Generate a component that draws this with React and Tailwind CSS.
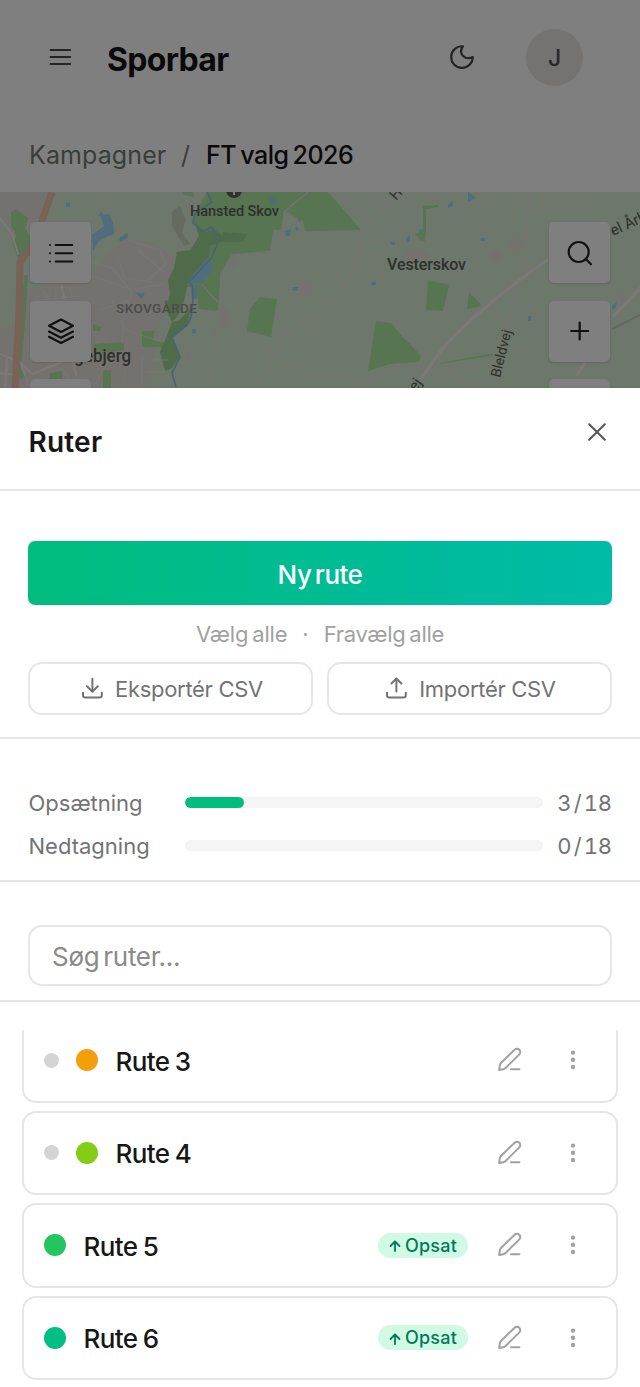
const routes = [
  { name: "Rute 3", color: "bg-[#f59e0b]", handle: true, done: false },
  { name: "Rute 4", color: "bg-[#84cc16]", handle: true, done: false },
  { name: "Rute 5", color: "bg-[#22c55e]", handle: false, done: true },
  { name: "Rute 6", color: "bg-[#02bd84]", handle: false, done: true },
];

function Icon({ size, width = 2, className = "", children }) {
  return (
    <svg
      width={size}
      height={size}
      viewBox={`0 0 ${size} ${size}`}
      fill="none"
      stroke="currentColor"
      strokeWidth={width}
      strokeLinecap="round"
      strokeLinejoin="round"
      className={`shrink-0 ${className}`}
    >
      {children}
    </svg>
  );
}

function MapButton({ children }) {
  return (
    <button className="flex size-[61px] shrink-0 items-center justify-center rounded-[5px] bg-white text-[#222] shadow-sm">
      {children}
    </button>
  );
}

function MapCanvas() {
  return (
    <svg width="640" height="196" viewBox="0 192 640 196" className="block">
      <rect y="192" width="640" height="196" fill="#dceed6" />

      {/* Built-up areas */}
      <g fill="#e9e4df">
        <path d="M0 192h50l-8 26-14 36-8 6-14-34-6-8z" />
        <path d="M22 290l68-16 20-22 18-12 24 2 20 14 10-4-6 20-2 30-14 20-4 20-6 46H0v-60l18-4z" />
        <path d="M219 233l10 5-5 8-6-2zM231 246h6l1 10-7 1zM221 307l8 2-2 18-8-4zM186 266l6-3-2 5z" />
        <path d="M229 258l10 0-2 8-8 4zM186 350l6 6-6 8zM208 334l8-5v6z" />
        <circle cx="306" cy="289" r="7" />
        <circle cx="516" cy="245" r="7" />
        <circle cx="496" cy="256" r="6" />
        <path d="M405 252h24v8h-26zM614 296l10-3 3 9-8 5z" />
      </g>
      <path d="M172 212l8-6 6 14-4 12 8 12-6 2-12-20z" fill="#ccd6c4" />

      {/* Forest */}
      <g fill="#aeeaa2">
        <path d="M207 192h101l-24 20-3 18h-8l-3 22-38 3-11 18-3 38-19-2-3-22-10 0-10-35 14-2 13-19-10-8 2-10z" />
        <path d="M285 211l23-19h20l33 38-56 1-2-10z" />
        <path d="M260 297l17 2-6 38-24-6 3-22z" />
        <path d="M428 280l21 5-6 26-17-1zM469 292l13 14-15 3zM376 321l15 2 10 12 11 11 9 10-2 6-30 2-21 7z" />
        <path d="M11 212l5-3 12 9-3 10 6 10-4 14-9 6-6-16 4-5-1-5-4-6zM24 275h4l-3 50-4 44 7 8-8 2-3-14z" />
        <path d="M93 324l8 3-1 4h-7zM94 344l30-2v8l-30 4zM142 331l12 0v10l12 2v-5l8 2-3 26h-6l-1-16-4-3h-18zM50 373l12-2v8l-14 2zM103 370h8v18h-8z" />
        <path d="M423 206l15-1v2l-12 2v20l-1 12-5-1-5-6 8-2zM440 363l50-9 6 1-56 9zM182 192h12v5l-10-2z" />
      </g>
      <g fill="#9ed694">
        <path d="M177 252l14-2 8-14-4-12 10 8 10-2 8 6 0-4 24 2-4 8-22 0-11 4-2 14-20 22-4 20-6 14-6 6-6-12 4-16-2-14 6-12z" />
        <path d="M172 322l-6 16-6 14 4 16 2 3 6-3 8-12-8-18 15-12 4-18-12 12z" />
      </g>

      {/* Water */}
      <g fill="#a0d8fa">
        <path d="M98 216l3-4 3 3 5-1 4 9 1 11-6 2-9 5-6 10-1-16 12-9-3-10zM118 239l9-6 1 4-7 5zM207 258l5 5v7l-10 13h-15l5-7zM66 203h4v4h-4zM135 293h10l-3 6zM285 231l6-2-1 7h-4zM296 226l3 2-2 3-2-2zM298 217l3 3v3l-3-3zM269 197l7 1 1 6-5 0zM293 287l5 0v4l-6-1zM192 329h4v4h-4zM193 285h4v14h-4z" />
        <path d="M448 204l5-3 0 5-5 2zM468 192l8 6-4 2-4 2zM406 238l4-3v6l-3 2zM390 242h5v3h-4zM371 282h5v3h-4zM480 238h5v3h-4zM528 316h3v5h-3zM612 305l5-3-1 5-4 3zM419 230l4-1-1 4-3 1z" />
      </g>
      <path
        d="M207 192l5 10-17 11-2 10 10 8 9-4 6 15-6 15-20 22-4 2 4 4 1 15-2 17-4 8-15 12 8 20-8 16 4 14"
        fill="none"
        stroke="#92c8e8"
        strokeWidth="1.8"
        strokeLinejoin="round"
      />

      {/* Minor roads */}
      <g fill="none" stroke="#eee4e6" strokeWidth="1.2" strokeLinejoin="round">
        <path d="M308 192l-24 20-3 38-49 5-11 18-3 54 26 2 20 18 50 30h8M320 309l-22 18-14 6-9 24-20 30M218 327l-6 48-10 12M202 284l8 10 8 8" />
        <path d="M398 194l-36 40-1 18q-10 34-41 56M363 253l24 4M449 270l38 34 20 22M320 377q20-8 40 5 14-10 48-16l32-1 28 18 26-2M529 192l-4 60-16 70-12 66M527 208l62 2M510 352l30-6 60-10M600 286l4 12" />
      </g>
      <g fill="none" stroke="#f2eeec" strokeWidth="1.2" opacity=".8">
        <path d="M92 262l20 6 18 22 34-6M118 256l6 22 28 4M112 300l14 30 30 10M124 310l-2 34M138 250l26 22M128 240l32 10 6 14-18 16M92 276l40 14-6 24M100 310l30-10M110 358l-16 28M128 356l-4 26M142 356v28M148 360h20M146 372h18M64 372l14 16M40 300l40-4M42 290l8 10M56 288v14M70 286l2 10" />
      </g>

      {/* Larger roads */}
      <g fill="none" stroke="#fbf0f0" strokeWidth="3" strokeLinecap="round">
        <path d="M420 380l20-28q36-42 107-92M577 375l8-12M614 316l26-28" />
        <path d="M0 218l12 16 6 20M0 354l20 8 12 12 40-16M20 362l10 26M0 373l16 2M7 358l-2 30M62 286l2 12M71 358l6 18" strokeWidth="2" />
      </g>
      <path d="M612 329l28-14" stroke="#c9cfc2" strokeWidth="2" />
      <path d="M52 192l-11 32-12 26-9 12-1 50-4 78" fill="none" stroke="#e0cbbc" strokeWidth="7" />
      <path d="M52 192l-11 32-12 26-9 12-1 50-4 78" fill="none" stroke="#f8c4a6" strokeWidth="4.5" />

      {/* Place names */}
      <circle cx="234" cy="190" r="8" fill="#5c665a" />
      <path d="M234 190v5" stroke="#fff" strokeWidth="2" />
      <g fontFamily="Roboto, sans-serif" fontWeight="500" fill="#5a625a">
        <text x="190" y="216" fontSize="14.5" textLength="89">Hansted Skov</text>
        <text x="116" y="313" fontSize="13.5" fill="#979793" textLength="81">SKOVGÅRDE</text>
        <text x="387" y="269.5" fontSize="16" textLength="79">Vesterskov</text>
        <text x="65" y="361.5" fontSize="17.5" textLength="66" lengthAdjust="spacingAndGlyphs">Egebjerg</text>
        <g fontWeight="400">
          <text x="500" y="378" fontSize="14" transform="rotate(-76 500 378)">Bleldvej</text>
          <text x="613" y="236" fontSize="15" transform="rotate(-25 613 236)">el Årh</text>
          <text x="396" y="201" fontSize="15" transform="rotate(-48 396 201)">Ha</text>
          <text x="416" y="392" fontSize="15" transform="rotate(-55 416 392)">ej</text>
        </g>
      </g>
    </svg>
  );
}

function ProgressRow({ label, value, total }) {
  return (
    <div className="flex h-8 items-center text-[22px] text-[#737373]">
      <span className="w-[156px]">{label}</span>
      <div className="mb-0.5 h-[11px] flex-1 overflow-hidden rounded-full bg-neutral-100">
        <div className="h-full rounded-full bg-[#00bc7d]" style={{ width: `${(value / total) * 100}%` }} />
      </div>
      <span className="w-[69px] text-right tracking-[-0.4px] whitespace-nowrap tabular-nums [word-spacing:-3px]">
        {value} / {total}
      </span>
    </div>
  );
}

function RouteCard({ name, color, handle, done }) {
  return (
    <div className="flex h-[84.5px] shrink-0 items-center rounded-[14px] border-2 border-[#e6e6e6] pl-5">
      {handle && <span className="mr-[17px] size-[15px] rounded-full bg-neutral-300" />}
      <span className={`size-[22px] rounded-full ${color}`} />
      <span className="mt-0.5 ml-[17.5px] flex-1 text-[26px] font-medium tracking-[-0.6px] text-neutral-900 [word-spacing:-1px]">
        {name}
      </span>
      {done && (
        <span className="mr-[29px] flex h-[25px] w-[90px] items-center justify-center gap-1 rounded-full bg-[#d0fae5] text-[18px] font-medium text-[#007a55]">
          <Icon size={12} width={1.8} className="mt-0.5">
            <path d="M6 11V1.5M1.5 6L6 1.5 10.5 6" />
          </Icon>
          <span className="tracking-[0.2px]">Opsat</span>
        </span>
      )}
      <Icon size={25} className="mr-[47.5px] mb-px text-neutral-400">
        <path d="M2.1 23.1l.7-4.6q.2-1.5 1.4-2.7L17.6 2.7a3.3 3.3 0 0 1 4.7 4.7L8.9 20.8q-1.1 1.1-2.6 1.4zM14 22.2h8.4" />
      </Icon>
      <svg width="6" height="20" viewBox="0 0 6 20" fill="currentColor" className="mr-[40.5px] shrink-0 text-neutral-400">
        <circle cx="3" cy="2.6" r="2.2" />
        <circle cx="3" cy="9.8" r="2.2" />
        <circle cx="3" cy="17" r="2.2" />
      </svg>
    </div>
  );
}

export default function App() {
  return (
    <div className="relative flex h-[1387px] w-[640px] flex-col overflow-hidden bg-white font-['Inter',sans-serif]">
      {/* Page behind the sheet */}
      <header className="flex h-[114px] items-center pr-[57px] pl-[48px]">
        <Icon size={24} width={2.2} className="text-[#484848]">
          <path d="M2.7 5h19.4M2.7 12h19.4M2.7 19h19.4" />
        </Icon>
        <h1 className="mt-[5px] ml-[35px] flex-1 text-[32px] font-bold tracking-[-0.7px] text-[#141414]">Sporbar</h1>
        <Icon size={24} width={2.2} className="text-[#484848]">
          <path d="M12.9 1.3A10.8 10.8 0 1 0 22.8 12C15.5 15.8 7.5 9 12.9 1.3z" />
        </Icon>
        <div className="ml-[52px] flex size-[57px] items-center justify-center rounded-full bg-[#e9e6e2] pt-0.5 text-[23px] font-medium text-[#505050]">
          J
        </div>
      </header>

      <nav className="flex h-[78px] items-center pt-[5px] pl-[29px] text-[25px]">
        <span className="w-[152px] tracking-[0.1px] text-[#757d73]">Kampagner</span>
        <span className="w-[25px] text-[#757d73]">/</span>
        <span className="font-medium tracking-[-0.5px] text-[#141414] [word-spacing:-2px]">FT valg 2026</span>
      </nav>

      <div className="relative h-[196px] shrink-0 overflow-hidden">
        <MapCanvas />
        <div className="absolute top-[30px] left-[30px] flex flex-col gap-[17.5px]">
          <MapButton>
            <Icon size={26}>
              <path d="M2 5h.01M2 13.2h.01M2 21.5h.01M7.7 5h16.6M7.7 13.2h16.6M7.7 21.5h16.6" />
            </Icon>
          </MapButton>
          <MapButton>
            <Icon size={26} width={2.2}>
              <path d="M13 1.5l12 6.2-12 6.2L1 7.7zM1 13.6l12 6.2 12-6.2M1 18.7l12 6.2 12-6.2" />
            </Icon>
          </MapButton>
          <MapButton />
        </div>
        <div className="absolute top-[30px] right-[30px] flex flex-col gap-[17.5px]">
          <MapButton>
            <Icon size={26} width={2.2}>
              <circle cx="11.7" cy="12" r="10" />
              <path d="M19 19.3l5 5" />
            </Icon>
          </MapButton>
          <MapButton>
            <Icon size={26} width={2.2}>
              <path d="M12.7 4.5v17M4.2 13h17" />
            </Icon>
          </MapButton>
          <MapButton />
        </div>
      </div>

      <div className="absolute inset-x-0 top-0 h-[388px] bg-black/50" />

      {/* Sheet */}
      <section className="relative flex flex-1 flex-col bg-white shadow-sm">
        <div className="flex h-[103px] shrink-0 items-start justify-between border-b-2 border-[#e6e6e6] pr-[34px] pl-[28.5px]">
          <h2 className="pt-[38px] text-[28px] leading-8 font-semibold tracking-[0.2px] text-neutral-900">Ruter</h2>
          <Icon size={18} width={2} className="mt-[35px] text-[#555]">
            <path d="M1.2 1.2l15.6 15.6M16.8 1.2L1.2 16.8" />
          </Icon>
        </div>

        <div className="border-b-2 border-[#e6e6e6] px-7 pt-[50px] pb-[22px]">
          <button className="h-16 w-full rounded-[7px] bg-linear-to-r from-[#00bc7d] to-[#00bba7] pt-0.5 text-[26px] font-medium tracking-[-0.5px] text-white [word-spacing:-3px]">
            Ny rute
          </button>
          <div className="flex h-[57px] items-center justify-center gap-[15px] pt-0.5 text-[22px] text-neutral-400 [word-spacing:-2px]">
            <span className="tracking-[-0.2px]">Vælg alle</span>
            <span>·</span>
            <span className="tracking-[-0.3px]">Fravælg alle</span>
          </div>
          <div className="grid grid-cols-2 gap-[14px] text-[22px] text-[#737373] [word-spacing:-2px]">
            <button className="flex h-[53px] items-center justify-center gap-[11px] rounded-[14px] border-2 border-[#e6e6e6] pl-[3px]">
              <Icon size={23}>
                <path d="M11.4 1.7v12.8M6 9.3l5.4 5.4 5.4-5.4M2 15.7v2.6q0 2.3 2.3 2.3h14.2q2.3 0 2.3-2.3v-2.6" />
              </Icon>
              <span className="pt-0.5 tracking-[-0.3px]">Eksportér CSV</span>
            </button>
            <button className="flex h-[53px] items-center justify-center gap-[11px] rounded-[14px] border-2 border-[#e6e6e6] pl-0.5">
              <Icon size={23}>
                <path d="M11.4 14.5V1.7M6.4 6.5l5-5 5 5M2 15.7v2.6q0 2.3 2.3 2.3h14.2q2.3 0 2.3-2.3v-2.6" />
              </Icon>
              <span className="pt-0.5 tracking-[-0.3px]">Importér CSV</span>
            </button>
          </div>
        </div>

        <div className="flex flex-col gap-[11px] border-b-2 border-[#e6e6e6] px-[28.5px] pt-12 pb-[18px]">
          <ProgressRow label="Opsætning" value={3} total={18} />
          <ProgressRow label="Nedtagning" value={0} total={18} />
        </div>

        <div className="border-b-2 border-[#e6e6e6] px-7 pt-[43px] pb-[13.5px]">
          <input
            placeholder="Søg ruter..."
            className="h-[61px] w-full rounded-[14px] border-2 border-[#e6e6e6] px-[22px] pt-0.5 text-[26px] tracking-[-0.3px] [word-spacing:-3px] placeholder:text-[#8a8a8a]"
          />
        </div>

        <div className="mt-[28.5px] h-[357px] overflow-hidden px-[22px]">
          <div className="-mt-3 flex flex-col gap-2">
            {routes.map((route) => (
              <RouteCard key={route.name} {...route} />
            ))}
          </div>
        </div>
      </section>
    </div>
  );
}
